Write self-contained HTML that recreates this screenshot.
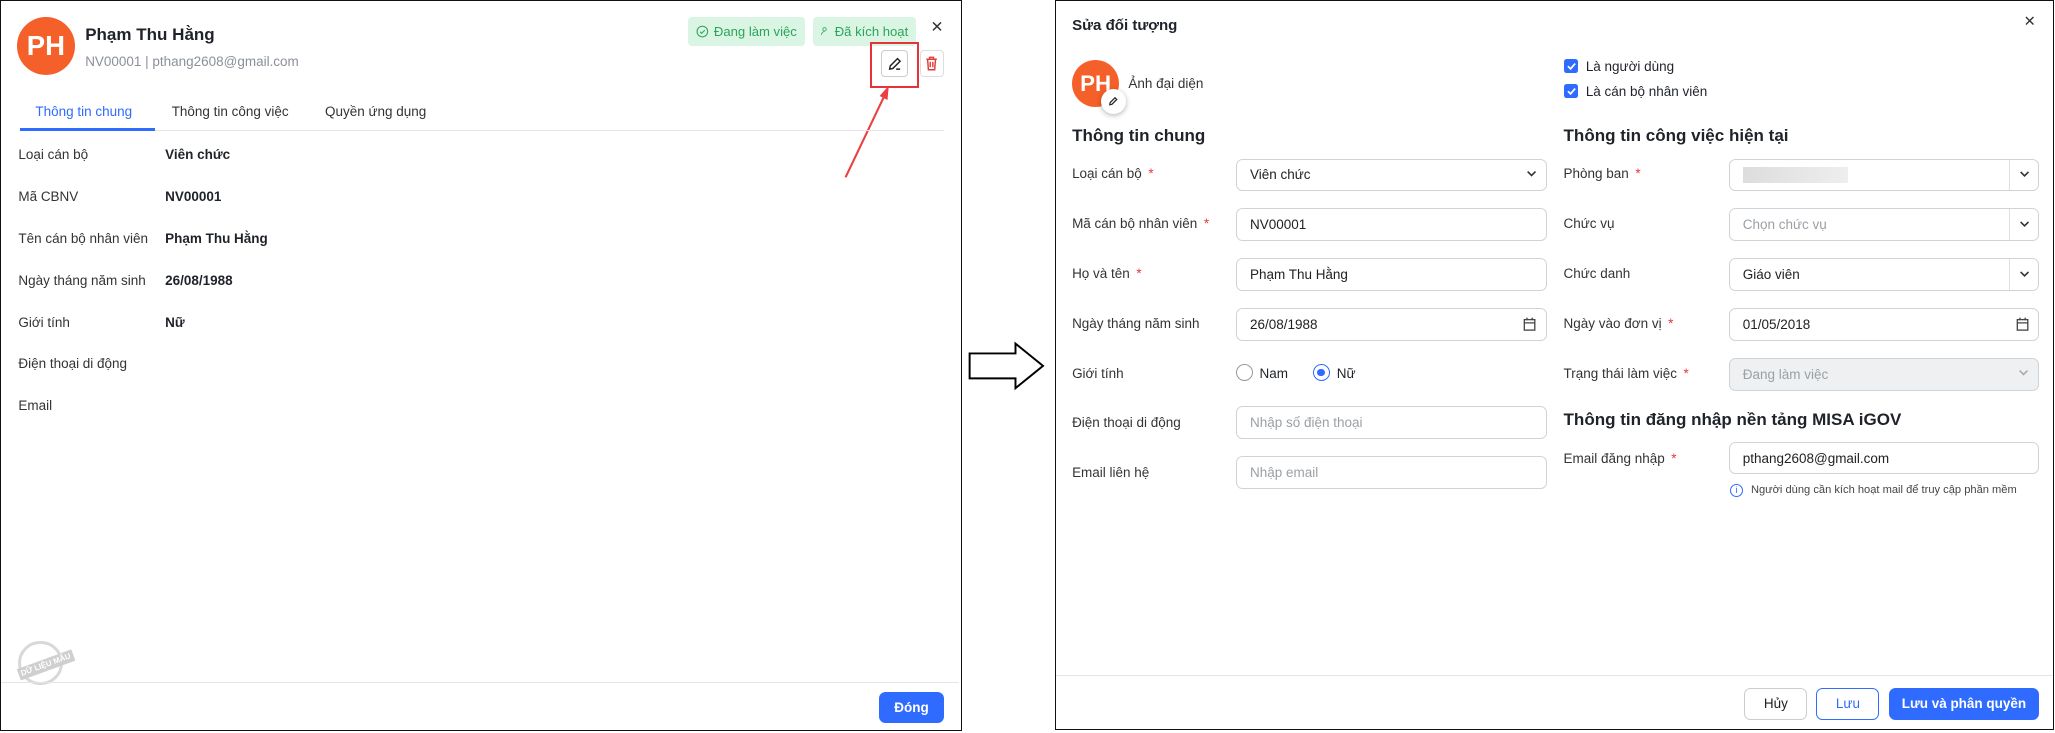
<!DOCTYPE html>
<html><head><meta charset="utf-8"><style>
*{box-sizing:border-box;margin:0;padding:0}
html,body{width:2055px;height:733px;overflow:hidden;background:#fff}
#r{zoom:1.3106;width:1568px;height:559px;position:relative;font-family:"Liberation Sans",sans-serif;color:#1f2329;font-size:10.3px}
.a{position:absolute;white-space:nowrap}
.panel{position:absolute;border:1px solid #111;background:#fff}
.av{position:absolute;border-radius:50%;background:#f5602a;color:#fff;font-weight:bold;display:flex;align-items:center;justify-content:center}
.badge{position:absolute;height:22px;background:#daf5e3;color:#2aa55a;border-radius:3px;font-size:10px;display:flex;align-items:center;gap:4px;padding:0 6px;white-space:nowrap}
.lbl{color:#333}
.val{font-weight:bold}
.inp{position:absolute;height:25px;border:1px solid #cfd3d8;border-radius:5px;display:flex;align-items:center;padding-left:10px;color:#222;font-size:10.3px;white-space:nowrap}
.ph{color:#9aa0a6}
.req{color:#e53935;margin-left:5px}
.chev{position:absolute;right:0;top:0;height:100%;width:22px;border-left:1px solid #dde0e4;display:flex;align-items:center;justify-content:center}
.btn{position:absolute;height:24px;border-radius:5px;display:flex;align-items:center;justify-content:center;font-size:10.3px;font-weight:bold}
h3{position:absolute;font-size:13px;font-weight:600;white-space:nowrap}
</style></head><body><div id="r">

<div class="panel" style="left:0;top:0;width:734px;height:558px"></div>
<div class="av" style="left:13px;top:13px;width:44px;height:44px;font-size:21px">PH</div>
<div class="a" style="left:65px;top:19px;font-size:13px;font-weight:600">Phạm Thu Hằng</div>
<div class="a" style="left:65px;top:41px;font-size:10.3px;color:#8a9099">NV00001 | pthang2608@gmail.com</div>
<div class="badge" style="left:525px;top:13px;width:89px"><svg width="10" height="10" viewBox="0 0 12 12"><circle cx="6" cy="6" r="5" fill="none" stroke="#2aa55a"/><path d="M3.8 6.2l1.5 1.5 3-3" fill="none" stroke="#2aa55a"/></svg>Đang làm việc</div>
<div class="badge" style="left:620px;top:13px;width:79px"><svg width="10" height="11" viewBox="0 0 12 12"><circle cx="6" cy="3.5" r="2.2" fill="none" stroke="#2aa55a"/><path d="M2 11c0-3 2-4.5 4-4.5" fill="none" stroke="#2aa55a"/></svg>Đã kích hoạt</div>
<div class="a" style="left:710px;top:13px;font-size:12px;color:#333">✕</div>
<div class="a" style="left:664px;top:32px;width:37px;height:35px;border:2px solid #e8323a"></div>
<div class="a" style="left:672px;top:38px;width:21px;height:21px;border:1px solid #ccc;border-radius:3px;display:flex;align-items:center;justify-content:center"><svg width="12" height="12" viewBox="0 0 12 12"><path d="M2 10l.5-2.5L8 2l2 2-5.5 5.5z M7 10h3" fill="none" stroke="#222" stroke-width="1.1"/></svg></div>
<div class="a" style="left:702px;top:38px;width:18px;height:21px;border:1px solid #ddd;border-radius:3px;display:flex;align-items:center;justify-content:center"><svg width="10" height="11" viewBox="0 0 10 11"><path d="M1 2.5h8M3.5 2.5V1h3v1.5M2 2.5l.6 8h4.8l.6-8M4 4.5v4M6 4.5v4" fill="none" stroke="#e53935" stroke-width="1.1"/></svg></div>
<svg class="a" style="left:640px;top:60px" width="45" height="80"><line x1="5" y1="75" x2="36" y2="10" stroke="#ec4040" stroke-width="1.6"/><path d="M38 5l-1 11-6-3z" fill="#ec4040"/></svg>
<div class="a" style="left:27px;top:79px;color:#2f6bff">Thông tin chung</div>
<div class="a" style="left:131px;top:79px;color:#333">Thông tin công việc</div>
<div class="a" style="left:248px;top:79px;color:#333">Quyền ứng dụng</div>
<div class="a" style="left:15px;top:99px;width:705px;height:1px;background:#e3e5e8"></div>
<div class="a" style="left:15px;top:97.5px;width:103px;height:2.5px;background:#2f6bff"></div>
<div class="a lbl" style="left:14px;top:112px">Loại cán bộ</div><div class="a val" style="left:126px;top:112px">Viên chức</div>
<div class="a lbl" style="left:14px;top:144px">Mã CBNV</div><div class="a val" style="left:126px;top:144px">NV00001</div>
<div class="a lbl" style="left:14px;top:176px">Tên cán bộ nhân viên</div><div class="a val" style="left:126px;top:176px">Phạm Thu Hằng</div>
<div class="a lbl" style="left:14px;top:208px">Ngày tháng năm sinh</div><div class="a val" style="left:126px;top:208px">26/08/1988</div>
<div class="a lbl" style="left:14px;top:240px">Giới tính</div><div class="a val" style="left:126px;top:240px">Nữ</div>
<div class="a lbl" style="left:14px;top:272px">Điện thoại di động</div>
<div class="a lbl" style="left:14px;top:304px">Email</div>
<div class="a" style="left:14px;top:489px;width:34px;height:34px;border:3px solid #d8d8d8;border-radius:50%"></div>
<div class="a" style="left:13px;top:503px;font-size:6px;font-weight:bold;color:#fff;background:#cfcfcf;padding:1px 2px;transform:rotate(-20deg)">DỮ LIỆU MẪU</div>
<div class="a" style="left:1px;top:520px;width:731px;height:1px;background:#e3e5e8"></div>
<div class="btn" style="left:671px;top:528px;width:49px;background:#2f6bff;color:#fff">Đóng</div>

<svg class="a" style="left:738px;top:260px" width="62" height="38"><path d="M2 9.5h35V2l21 17-21 17v-7.5H2z" fill="#fff" stroke="#000" stroke-width="1.5"/></svg>

<div class="panel" style="left:805px;top:0;width:762px;height:557px"></div>
<div class="a" style="left:818px;top:13px;font-size:11.5px;font-weight:600">Sửa đối tượng</div>
<div class="a" style="left:1544px;top:11px;font-size:11px;color:#333">✕</div>
<div class="av" style="left:818px;top:46px;width:36px;height:36px;font-size:17px">PH</div>
<div class="a" style="left:840px;top:68px;width:19px;height:19px;border-radius:50%;background:#fff;box-shadow:0 1px 4px rgba(0,0,0,.3);display:flex;align-items:center;justify-content:center"><svg width="8" height="8" viewBox="0 0 12 12"><path d="M2 10l.5-2.5L8 2l2 2-5.5 5.5z" fill="none" stroke="#222" stroke-width="1.4"/></svg></div>
<div class="a" style="left:861px;top:58px;color:#333">Ảnh đại diện</div>
<div class="a" style="left:1193px;top:45px;width:11px;height:11px;background:#2f6bff;border-radius:2px"><svg width="11" height="11"><path d="M3 5.5l2 2 3.5-4" fill="none" stroke="#fff" stroke-width="1.3"/></svg></div>
<div class="a" style="left:1210px;top:45px">Là người dùng</div>
<div class="a" style="left:1193px;top:64px;width:11px;height:11px;background:#2f6bff;border-radius:2px"><svg width="11" height="11"><path d="M3 5.5l2 2 3.5-4" fill="none" stroke="#fff" stroke-width="1.3"/></svg></div>
<div class="a" style="left:1210px;top:64px">Là cán bộ nhân viên</div>

<h3 style="left:818px;top:96px">Thông tin chung</h3>
<h3 style="left:1193px;top:96px">Thông tin công việc hiện tại</h3>

<div class="a lbl" style="left:818px;top:127px">Loại cán bộ<span class="req">*</span></div>
<div class="inp" style="left:943px;top:121px;width:237px">Viên chức<span style="position:absolute;right:6px;top:4px"><svg width="10" height="14"><path d="M2 5l3 3 3-3" fill="none" stroke="#333" stroke-width="1.2"/></svg></span></div>
<div class="a lbl" style="left:818px;top:165px">Mã cán bộ nhân viên<span class="req">*</span></div>
<div class="inp" style="left:943px;top:159px;width:237px">NV00001</div>
<div class="a lbl" style="left:818px;top:203px">Họ và tên<span class="req">*</span></div>
<div class="inp" style="left:943px;top:197px;width:237px">Phạm Thu Hằng</div>
<div class="a lbl" style="left:818px;top:241px">Ngày tháng năm sinh</div>
<div class="inp" style="left:943px;top:235px;width:237px">26/08/1988<span style="position:absolute;right:7px;top:6px"><svg width="10" height="11"><rect x="1" y="2" width="8" height="8" fill="none" stroke="#444"/><path d="M1 4.5h8M3 0.5v2M7 0.5v2" stroke="#444"/></svg></span></div>
<div class="a lbl" style="left:818px;top:279px">Giới tính</div>
<div class="a" style="left:943px;top:278px;width:13px;height:13px;border:1px solid #999;border-radius:50%"></div>
<div class="a" style="left:961px;top:279px">Nam</div>
<div class="a" style="left:1002px;top:278px;width:13px;height:13px;border:1px solid #2f6bff;border-radius:50%"><div style="margin:2.5px;width:6px;height:6px;border-radius:50%;background:#2f6bff"></div></div>
<div class="a" style="left:1020px;top:279px">Nữ</div>
<div class="a lbl" style="left:818px;top:317px">Điện thoại di động</div>
<div class="inp ph" style="left:943px;top:310px;width:237px">Nhập số điện thoại</div>
<div class="a lbl" style="left:818px;top:355px">Email liên hệ</div>
<div class="inp ph" style="left:943px;top:348px;width:237px">Nhập email</div>

<div class="a lbl" style="left:1193px;top:127px">Phòng ban<span class="req">*</span></div>
<div class="inp" style="left:1319px;top:121px;width:237px"><div style="width:80px;height:12px;background:linear-gradient(90deg,#ddd,#eee)"></div><div class="chev"><svg width="10" height="10"><path d="M2 3l3 3 3-3" fill="none" stroke="#333" stroke-width="1.2"/></svg></div></div>
<div class="a lbl" style="left:1193px;top:165px">Chức vụ</div>
<div class="inp ph" style="left:1319px;top:159px;width:237px">Chọn chức vụ<div class="chev"><svg width="10" height="10"><path d="M2 3l3 3 3-3" fill="none" stroke="#333" stroke-width="1.2"/></svg></div></div>
<div class="a lbl" style="left:1193px;top:203px">Chức danh</div>
<div class="inp" style="left:1319px;top:197px;width:237px">Giáo viên<div class="chev"><svg width="10" height="10"><path d="M2 3l3 3 3-3" fill="none" stroke="#333" stroke-width="1.2"/></svg></div></div>
<div class="a lbl" style="left:1193px;top:241px">Ngày vào đơn vị<span class="req">*</span></div>
<div class="inp" style="left:1319px;top:235px;width:237px">01/05/2018<span style="position:absolute;right:7px;top:6px"><svg width="10" height="11"><rect x="1" y="2" width="8" height="8" fill="none" stroke="#444"/><path d="M1 4.5h8M3 0.5v2M7 0.5v2" stroke="#444"/></svg></span></div>
<div class="a lbl" style="left:1193px;top:279px">Trạng thái làm việc<span class="req">*</span></div>
<div class="inp ph" style="left:1319px;top:273px;width:237px;background:#eef0f2">Đang làm việc<span style="position:absolute;right:6px;top:4px"><svg width="10" height="14"><path d="M2 5l3 3 3-3" fill="none" stroke="#aaa" stroke-width="1.2"/></svg></span></div>
<h3 style="left:1193px;top:313px">Thông tin đăng nhập nền tảng MISA iGOV</h3>
<div class="a lbl" style="left:1193px;top:344px">Email đăng nhập<span class="req">*</span></div>
<div class="inp" style="left:1319px;top:337px;width:237px">pthang2608@gmail.com</div>
<div class="a" style="left:1320px;top:369px;width:10px;height:10px;border:1px solid #2f6bff;border-radius:50%;font-size:7px;color:#2f6bff;text-align:center;line-height:9px">i</div>
<div class="a" style="left:1336px;top:369px;font-size:8.5px;color:#444">Người dùng cần kích hoạt mail để truy cập phần mềm</div>

<div class="a" style="left:806px;top:515px;width:760px;height:1px;background:#e3e5e8"></div>
<div class="btn" style="left:1331px;top:525px;width:48px;border:1px solid #ccc;color:#222;font-weight:normal">Hủy</div>
<div class="btn" style="left:1386px;top:525px;width:48px;border:1px solid #2f6bff;color:#2f6bff;font-weight:normal">Lưu</div>
<div class="btn" style="left:1441px;top:525px;width:115px;background:#2f6bff;color:#fff">Lưu và phân quyền</div>
</div></body></html>
